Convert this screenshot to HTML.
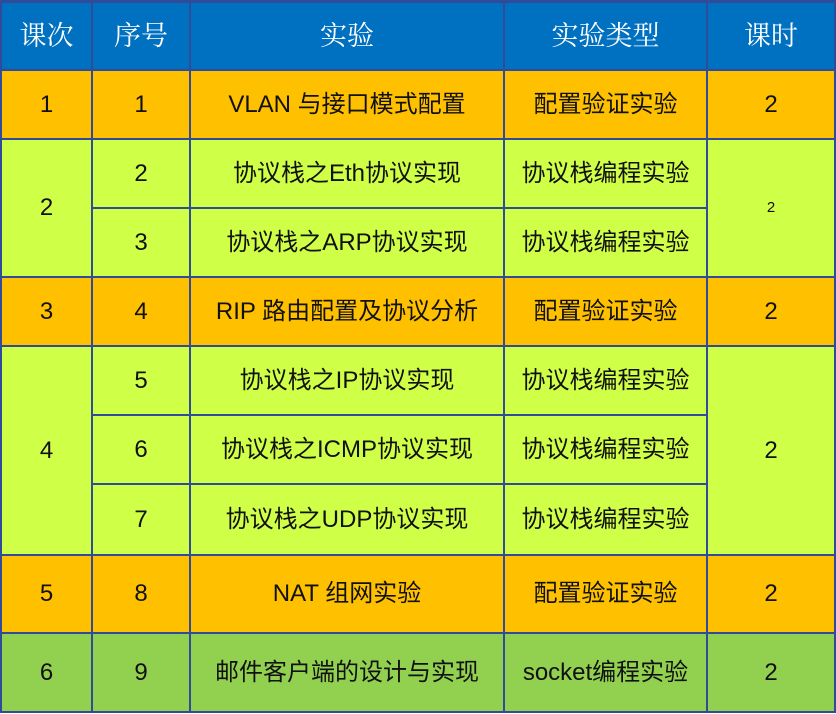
<!DOCTYPE html><html><head><meta charset="utf-8"><style>
body{margin:0;width:836px;height:714px;background:#fff;position:relative;overflow:hidden}
.b{position:absolute;left:0;top:0;width:836px;height:713px;background:#2f4b99}
.c{position:absolute;display:flex;align-items:center;justify-content:center;font-family:"Liberation Sans","Noto Sans CJK SC",sans-serif;font-size:24px;color:#111;line-height:1}
.c span{display:block;line-height:26px;height:26px}
.h{background:#0070c0;color:#fff;font-family:"Liberation Serif","Noto Serif CJK SC",serif;font-size:27px;font-weight:normal}
.o{background:#ffc000}.l{background:#d0ff48}.g{background:#92d050}
</style></head><body><div class="b"></div>
<script>
const X=[0,92,190,504,707,835],Y=[1,70,139,208,277,346,415,484,555,633,712];
function cell(c0,c1,r0,r1,cls,t){const d=document.createElement('div');d.className='c '+cls;d.style.left=(X[c0]+(c0==0?2:1))+'px';d.style.width=(X[c1]-X[c0]-(c0==0?3:2))+'px';d.style.top=(Y[r0]+(r0==0?2:1))+'px';d.style.height=(Y[r1]-Y[r0]-(r0==0?3:2))+'px';const s=document.createElement('span');s.textContent=t;d.appendChild(s);document.body.appendChild(d);return d;}
[['课次'],['序号'],['实验'],['实验类型'],['课时']].forEach((t,i)=>cell(i,i+1,0,1,'h',t[0]));
cell(0,1,1,2,'o','1');cell(1,2,1,2,'o','1');cell(2,3,1,2,'o','VLAN 与接口模式配置');cell(3,4,1,2,'o','配置验证实验');cell(4,5,1,2,'o','2');
cell(0,1,2,4,'l','2');cell(1,2,2,3,'l','2');cell(2,3,2,3,'l','协议栈之Eth协议实现');cell(3,4,2,3,'l','协议栈编程实验');
cell(1,2,3,4,'l','3');cell(2,3,3,4,'l','协议栈之ARP协议实现');cell(3,4,3,4,'l','协议栈编程实验');
cell(4,5,2,4,'l','2').style.fontSize='15px';
cell(0,1,4,5,'o','3');cell(1,2,4,5,'o','4');cell(2,3,4,5,'o','RIP 路由配置及协议分析');cell(3,4,4,5,'o','配置验证实验');cell(4,5,4,5,'o','2');
cell(0,1,5,8,'l','4');cell(4,5,5,8,'l','2');
[['5','协议栈之IP协议实现'],['6','协议栈之ICMP协议实现'],['7','协议栈之UDP协议实现']].forEach((r,i)=>{cell(1,2,5+i,6+i,'l',r[0]);cell(2,3,5+i,6+i,'l',r[1]);cell(3,4,5+i,6+i,'l','协议栈编程实验');});
cell(0,1,8,9,'o','5');cell(1,2,8,9,'o','8');cell(2,3,8,9,'o','NAT 组网实验');cell(3,4,8,9,'o','配置验证实验');cell(4,5,8,9,'o','2');
cell(0,1,9,10,'g','6');cell(1,2,9,10,'g','9');cell(2,3,9,10,'g','邮件客户端的设计与实现');cell(3,4,9,10,'g','socket编程实验');cell(4,5,9,10,'g','2');
</script></body></html>
